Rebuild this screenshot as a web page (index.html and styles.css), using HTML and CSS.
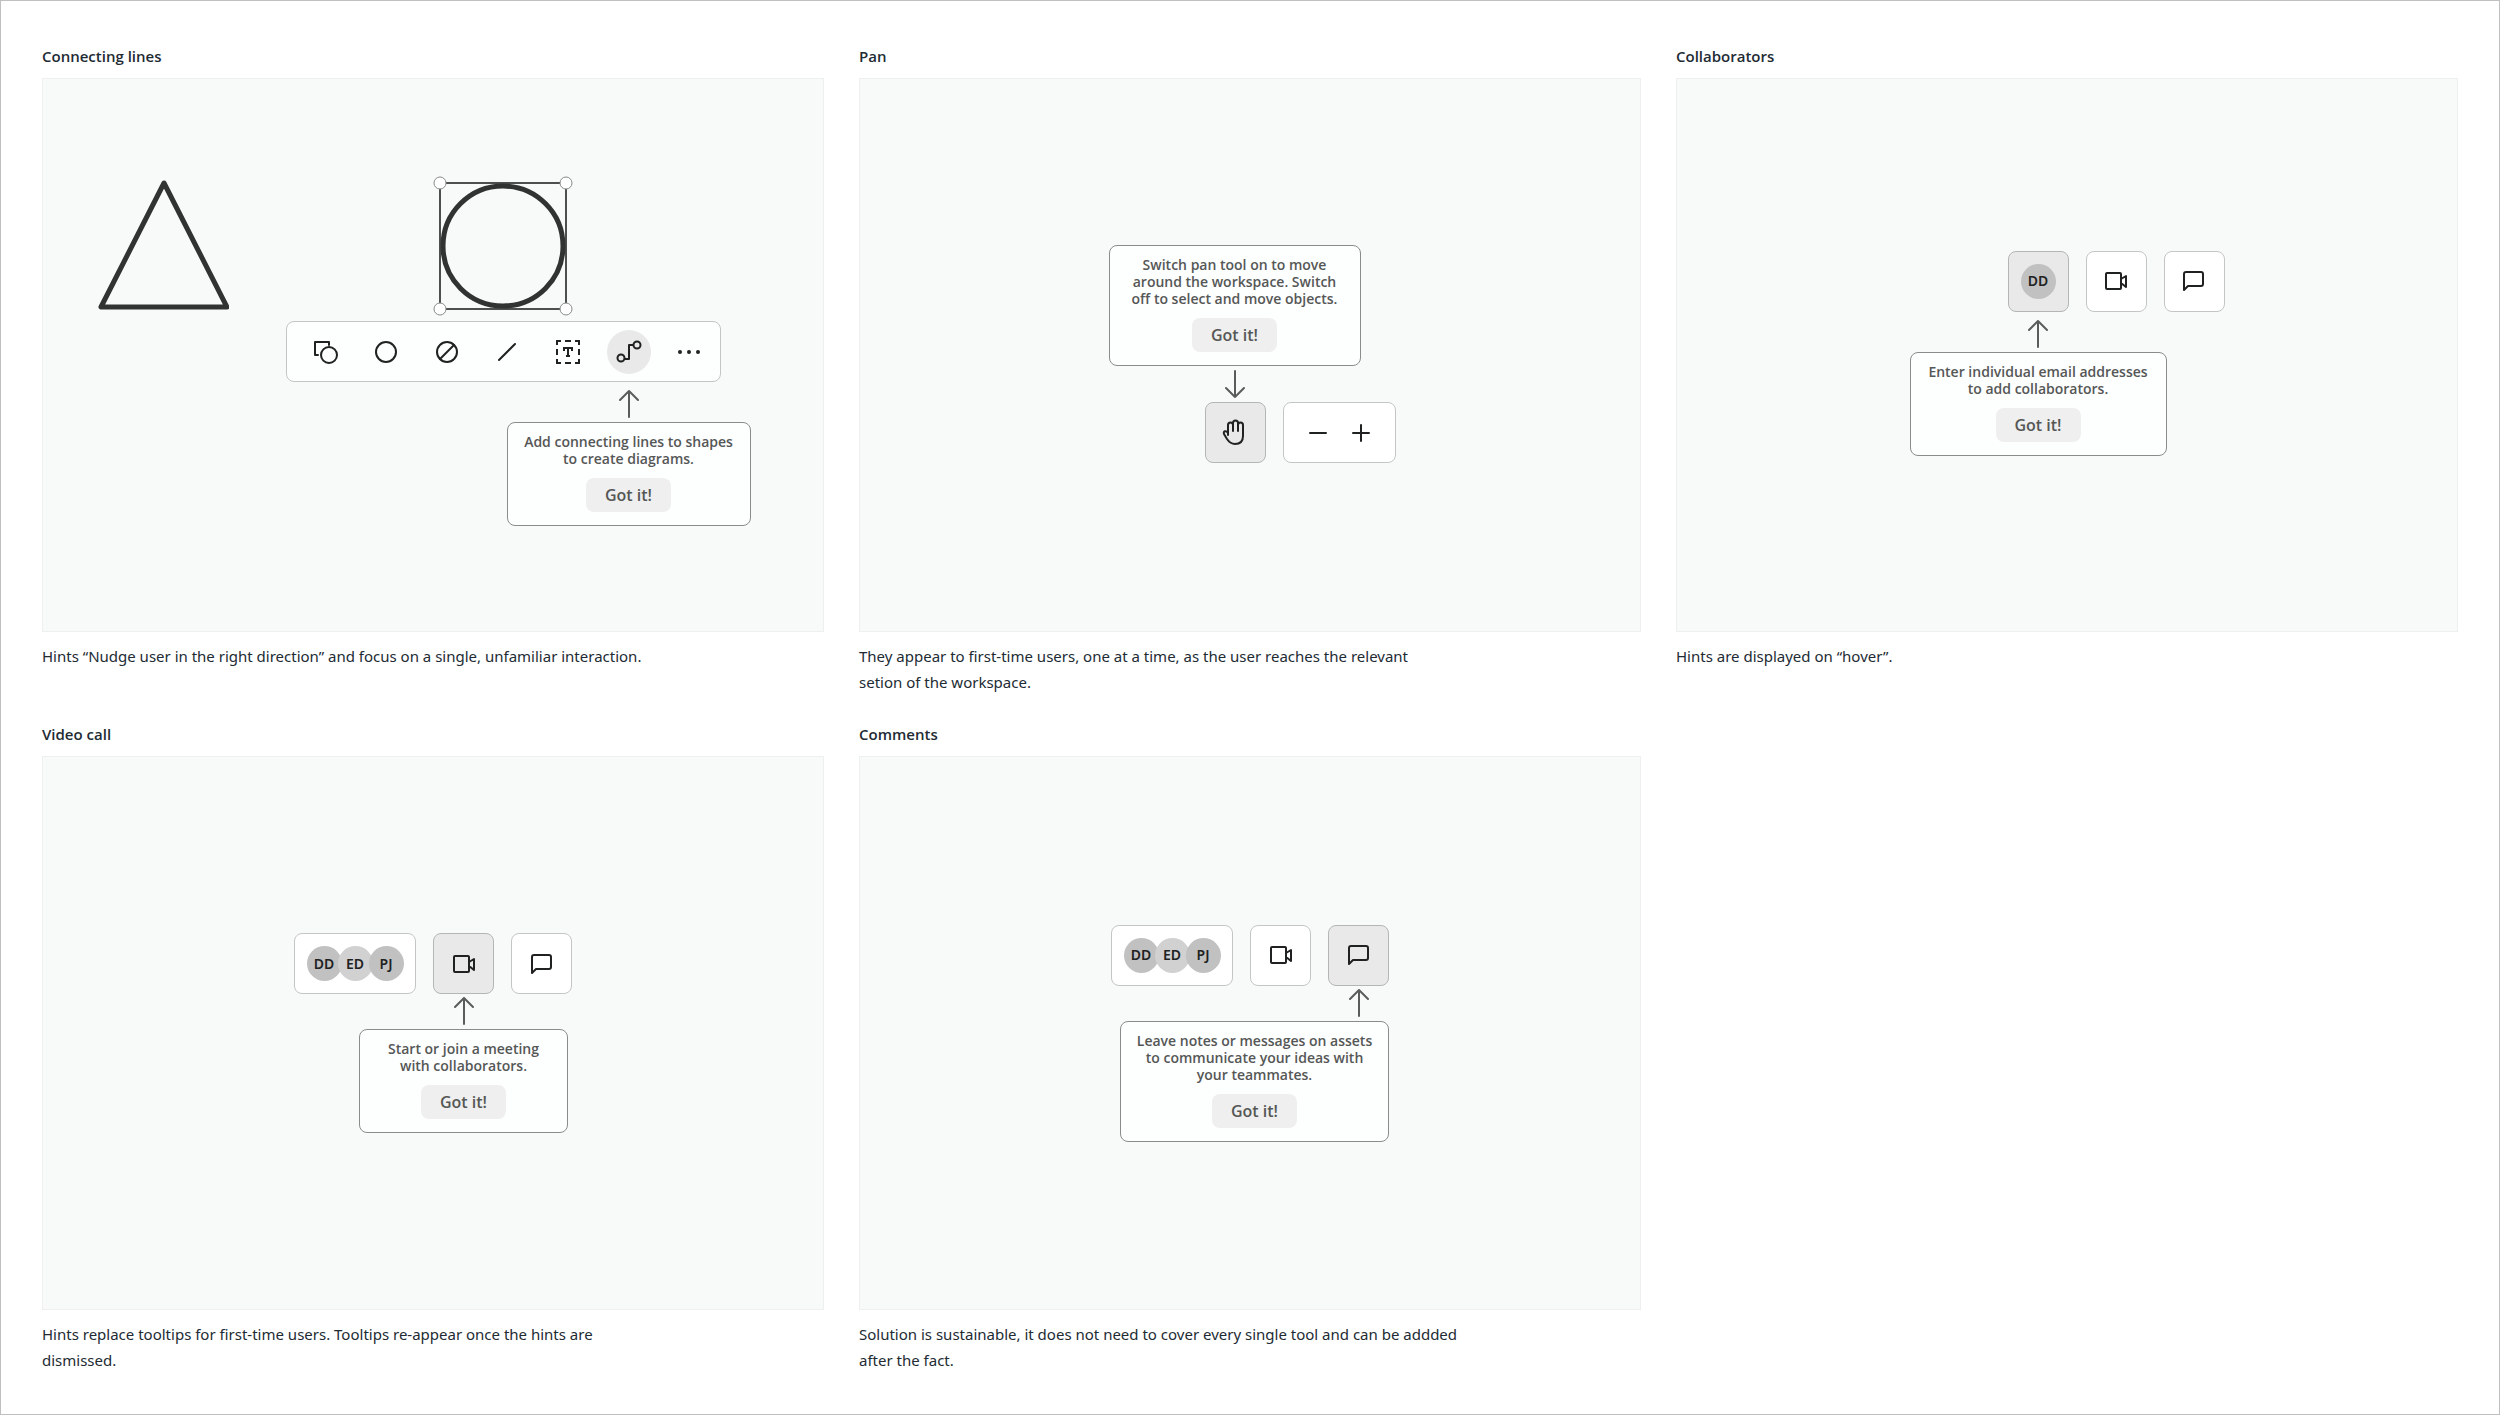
FILE: index.html
```html
<!DOCTYPE html>
<html lang="en">
<head>
<meta charset="utf-8">
<meta name="viewport" content="width=device-width, initial-scale=1">
<title>Hints</title>
<link rel="stylesheet" href="styles.css">
</head>
<body>
<svg class="defs" aria-hidden="true">
  <symbol id="arrow-up" viewBox="0 0 20 28"><path d="M10 27V1M1 10l9-9 9 9"/></symbol>
  <symbol id="video" viewBox="0 0 24 24"><rect x="2" y="4" width="15" height="16" rx="1"/><path d="M17 10l5-3v11l-5-4z"/></symbol>
  <symbol id="comment" viewBox="0 0 24 24"><path d="M4 3h15a2 2 0 0 1 2 2v10a2 2 0 0 1-2 2H6l-4 4V5a2 2 0 0 1 2-2z"/></symbol>
</svg>
<main class="board">
  <section class="card">
    <h2 class="title">Connecting lines</h2>
    <div class="panel">
      <div class="workspace">
        <svg class="triangle" viewBox="0 0 131 130" aria-hidden="true"><path d="M66 3L3 127h126z"/></svg>
        <div class="stack stack-tools">
          <svg class="selection" viewBox="0 0 140 140" aria-hidden="true">
            <rect class="bounds" x="7" y="7" width="126" height="126"/>
            <circle class="shape" cx="70" cy="70" r="60"/>
            <circle class="handle" cx="7" cy="7" r="6"/><circle class="handle" cx="133" cy="7" r="6"/>
            <circle class="handle" cx="7" cy="133" r="6"/><circle class="handle" cx="133" cy="133" r="6"/>
          </svg>
          <div class="toolbar">
            <button class="tool" aria-label="Shapes"><svg class="icon" viewBox="0 0 24 24"><path d="M4 15H1V2h14v3"/><circle cx="15" cy="15" r="8"/></svg></button>
            <button class="tool" aria-label="Border"><svg class="icon" viewBox="0 0 24 24"><circle cx="12" cy="12" r="10"/></svg></button>
            <button class="tool" aria-label="Fill"><svg class="icon" viewBox="0 0 24 24"><circle cx="12" cy="12" r="10"/><path d="M5 19L19 5"/></svg></button>
            <button class="tool" aria-label="Line"><svg class="icon" viewBox="0 0 24 24"><path d="M4 20L20 4"/></svg></button>
            <button class="tool" aria-label="Text"><svg class="icon" viewBox="0 0 24 24"><path class="flat" d="M1 5V1h4M9 1h6M19 1h4v4M23 9v6M23 19v4h-4M15 23H9M5 23H1v-4M1 15V9M8 11V8h8v3M12 8v8M10 16h4"/></svg></button>
            <button class="tool tool-on" aria-label="Connecting line"><svg class="icon" viewBox="0 0 24 24"><circle cx="4" cy="18" r="3.5"/><circle cx="20" cy="5" r="3.5"/><path d="M8 19h4V5h4"/></svg></button>
            <button class="tool" aria-label="More"><svg class="icon dots" viewBox="0 0 24 24"><circle cx="3" cy="12" r="2"/><circle cx="12" cy="12" r="2"/><circle cx="21" cy="12" r="2"/></svg></button>
          </div>
          <div class="pointer pointer-tools">
            <svg class="arrow"><use href="#arrow-up"/></svg>
            <div class="hint"><p class="message">Add connecting lines to shapes<br>to create diagrams.</p><button class="confirm">Got it!</button></div>
          </div>
        </div>
      </div>
    </div>
    <p class="caption">Hints “Nudge user in the right direction” and focus on a single, unfamiliar interaction.</p>
  </section>

  <section class="card">
    <h2 class="title">Pan</h2>
    <div class="panel">
      <div class="stack stack-pan">
        <div class="pointer pointer-pan">
          <div class="hint"><p class="message">Switch pan tool on to move<br>around the workspace. Switch<br>off to select and move objects.</p><button class="confirm">Got it!</button></div>
          <svg class="arrow arrow-down"><use href="#arrow-up"/></svg>
        </div>
        <div class="row row-pan">
          <button class="tile tile-on" aria-label="Pan"><svg class="icon" viewBox="0 0 24 24"><path d="M5 14V4a2 2 0 0 1 5 0v6M10 4V2a2 2 0 0 1 5 0v8M15 4a2 2 0 0 1 5 0v11c0 5-3 8-8 8-4 0-6-2-8-5l-3-5c-1-3 2-4 4-1"/></svg></button>
          <div class="tile zoom">
            <button class="step" aria-label="Zoom out"><svg class="icon" viewBox="0 0 24 24"><path d="M4 12h16"/></svg></button>
            <button class="step" aria-label="Zoom in"><svg class="icon" viewBox="0 0 24 24"><path d="M4 12h16M12 4v16"/></svg></button>
          </div>
        </div>
      </div>
    </div>
    <p class="caption">They appear to first-time users, one at a time, as the user reaches the relevant<br>setion of the workspace.</p>
  </section>

  <section class="card">
    <h2 class="title">Collaborators</h2>
    <div class="panel">
      <div class="stack stack-invite">
        <div class="row row-invite">
          <button class="tile tile-on"><span class="avatar">DD</span></button>
          <button class="tile" aria-label="Video call"><svg class="icon"><use href="#video"/></svg></button>
          <button class="tile" aria-label="Comments"><svg class="icon"><use href="#comment"/></svg></button>
        </div>
        <div class="pointer pointer-invite">
          <svg class="arrow"><use href="#arrow-up"/></svg>
          <div class="hint"><p class="message">Enter individual email addresses<br>to add collaborators.</p><button class="confirm">Got it!</button></div>
        </div>
      </div>
    </div>
    <p class="caption">Hints are displayed on “hover”.</p>
  </section>

  <section class="card">
    <h2 class="title">Video call</h2>
    <div class="panel">
      <div class="stack">
        <div class="row">
          <button class="tile people"><span class="avatar">DD</span><span class="avatar avatar-light">ED</span><span class="avatar">PJ</span></button>
          <button class="tile tile-on" aria-label="Video call"><svg class="icon"><use href="#video"/></svg></button>
          <button class="tile" aria-label="Comments"><svg class="icon"><use href="#comment"/></svg></button>
        </div>
        <div class="pointer pointer-call">
          <svg class="arrow"><use href="#arrow-up"/></svg>
          <div class="hint"><p class="message">Start or join a meeting<br>with collaborators.</p><button class="confirm">Got it!</button></div>
        </div>
      </div>
    </div>
    <p class="caption">Hints replace tooltips for first-time users. Tooltips re-appear once the hints are<br>dismissed.</p>
  </section>

  <section class="card">
    <h2 class="title">Comments</h2>
    <div class="panel">
      <div class="stack">
        <div class="row">
          <button class="tile people"><span class="avatar">DD</span><span class="avatar avatar-light">ED</span><span class="avatar">PJ</span></button>
          <button class="tile" aria-label="Video call"><svg class="icon"><use href="#video"/></svg></button>
          <button class="tile tile-on" aria-label="Comments"><svg class="icon"><use href="#comment"/></svg></button>
        </div>
        <div class="pointer pointer-notes">
          <svg class="arrow"><use href="#arrow-up"/></svg>
          <div class="hint"><p class="message">Leave notes or messages on assets<br>to communicate your ideas with<br>your teammates.</p><button class="confirm">Got it!</button></div>
        </div>
      </div>
    </div>
    <p class="caption">Solution is sustainable, it does not need to cover every single tool and can be addded<br>after the fact.</p>
  </section>
</main>
</body>
</html>
```
FILE: styles.css
```css
* { box-sizing: border-box; }

body {
  margin: 0;
  background: #fff;
  color: #222b33;
  font-family: "Open Sans", "Noto Sans", sans-serif;
  font-size: 15px;
}

button {
  margin: 0;
  padding: 0;
  border: 0;
  background: none;
  color: inherit;
  font: inherit;
  cursor: pointer;
}

.defs { display: none; }

.board {
  display: grid;
  grid-template-columns: repeat(3, minmax(0, 1fr));
  gap: 26px 35px;
  min-height: 100vh;
  align-content: start;
  padding: 42px 41px 40px;
  border: 1px solid #c0c0c0;
}

.title {
  margin: 0 0 9px;
  font-size: 15px;
  font-weight: 600;
  line-height: 26px;
}

.panel {
  display: flex;
  align-items: center;
  justify-content: center;
  aspect-ratio: 782 / 554;
  background: #f8faf9;
  border: 1px solid #eeefef;
}

.caption {
  min-height: 52px;
  margin: 11px 0 0;
  font-family: "Noto Sans", "Open Sans", sans-serif;
  line-height: 26px;
}

/* Canvas with shapes */
.workspace {
  display: flex;
  align-items: flex-start;
  gap: 57px;
  margin: 0 18px 8px 0;
}

.triangle {
  width: 131px;
  height: 130px;
  margin-top: 4px;
  fill: none;
  stroke: #303332;
  stroke-width: 5;
  stroke-linejoin: round;
}

.selection {
  width: 140px;
  height: 140px;
  margin: 0 0 5px 147px;
}

.bounds { fill: none; stroke: #4d4f4e; stroke-width: 2; }
.shape { fill: none; stroke: #303332; stroke-width: 5; }
.handle { fill: #fff; stroke: #888a89; stroke-width: 1; }

/* Tool clusters */
.stack {
  display: flex;
  flex-direction: column;
  align-items: flex-start;
}

.stack-pan { margin: 0 0 2px 4px; }
.stack-invite { margin-bottom: 4px; }

.row { display: flex; gap: 17px; }
.row-pan { margin-left: 96px; }
.row-invite { margin-left: 98px; }

.toolbar {
  display: flex;
  align-items: center;
  justify-content: space-between;
  width: 435px;
  height: 61px;
  padding: 0 8px 0 17px;
  background: #fdfefe;
  border: 1px solid #c4c6c5;
  border-radius: 8px;
}

.tool {
  display: grid;
  place-items: center;
  width: 44px;
  height: 44px;
  border-radius: 50%;
}

.tool-on { background: #e8e9e8; }

.tile {
  display: flex;
  align-items: center;
  justify-content: center;
  width: 61px;
  height: 61px;
  background: #fff;
  border: 1px solid #c4c6c5;
  border-radius: 8px;
}

.tile-on { background: #e8e9e8; border-color: #b4b6b5; }
.people { width: 122px; }
.zoom { width: 113px; gap: 19px; }
.step { display: flex; }

.icon {
  width: 24px;
  height: 24px;
  overflow: visible;
  fill: none;
  stroke: #202222;
  stroke-width: 2;
  stroke-linecap: round;
  stroke-linejoin: round;
}

.flat { stroke-linecap: butt; stroke-linejoin: miter; }
.dots { fill: #202222; stroke: none; }

.avatar {
  display: grid;
  place-items: center;
  width: 35px;
  height: 35px;
  background: #c0c1c0;
  border-radius: 50%;
  color: #202222;
  font: 600 14px/20px "Noto Sans", "Open Sans", sans-serif;
}

.avatar + .avatar { margin-left: -4px; }
.avatar-light { background: #d0d1d0; }

/* Hints */
.pointer {
  display: flex;
  flex-direction: column;
  align-items: center;
  gap: 4px;
  padding-top: 3px;
}

.pointer-tools { width: 244px; margin: 5px 0 0 221px; }
.pointer-pan { width: 252px; padding: 0 0 4px; }
.pointer-invite { width: 257px; margin-top: 5px; }
.pointer-call { width: 209px; margin-left: 65px; }
.pointer-notes { width: 269px; margin-left: 9px; }
.pointer-notes .arrow { align-self: flex-end; margin-right: 20px; }

.arrow {
  width: 20px;
  height: 28px;
  fill: none;
  stroke: #5a5c5b;
  stroke-width: 2;
  stroke-linecap: round;
  stroke-linejoin: round;
}

.arrow-down { transform: rotate(180deg); }

.hint {
  display: flex;
  flex-direction: column;
  align-items: center;
  gap: 11px;
  width: 100%;
  padding: 10px 0 13px;
  background: #fdfefe;
  border: 1px solid #8a8c8b;
  border-radius: 8px;
  color: #555756;
  font-weight: 600;
}

.message {
  margin: 0;
  font-size: 14px;
  line-height: 17px;
  text-align: center;
  white-space: nowrap;
}

.confirm {
  width: 85px;
  height: 34px;
  background: #eeefee;
  border-radius: 8px;
  font-size: 16px;
}
```
